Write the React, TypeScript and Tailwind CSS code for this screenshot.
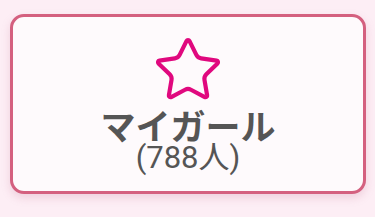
import { Star } from "lucide-react";

export default function App() {
  return (
    <div className="w-[375px] h-[217px] bg-[#fdeef5] pt-[14px] pl-[10px]">
      <div className="w-[356px] h-[180px] rounded-[14px] border-[3px] border-[#d4607f] bg-[#fefafc] shadow-[0_4px_8px_rgba(200,120,150,0.25)] flex flex-col items-center pt-[17px]">
        <Star size={72} strokeWidth={1.4} color="#e0087e" />
        <div
          className="mt-[2px] text-[35px] leading-[34px] font-bold text-[#555555]"
          style={{ fontFamily: '"Noto Sans CJK JP", sans-serif' }}
        >
          マイガール
        </div>
        <div
          className="mt-[1px] text-[31px] leading-[30px] text-[#555555]"
          style={{ fontFamily: 'Roboto, "Noto Sans CJK JP", sans-serif' }}
        >
          (788人)
        </div>
      </div>
    </div>
  );
}
